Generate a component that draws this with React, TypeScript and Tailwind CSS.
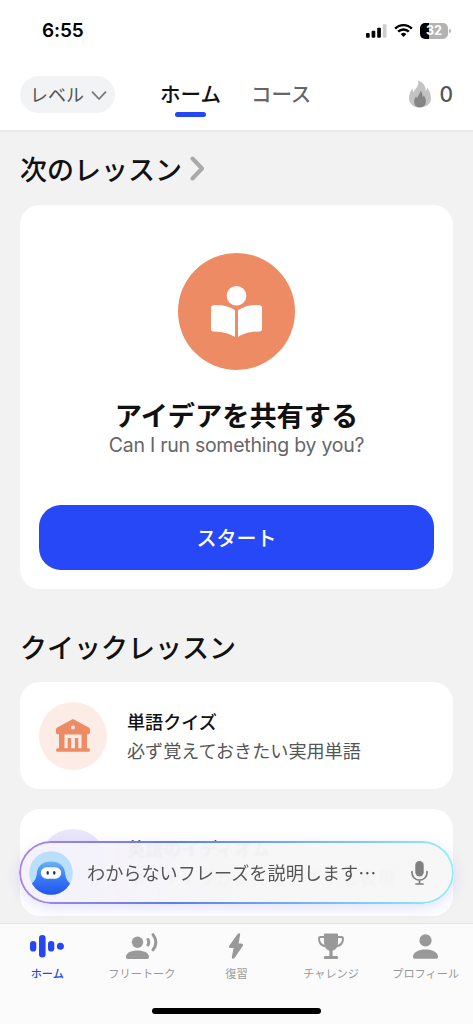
import type { ReactNode } from 'react'
import { clsx } from 'clsx'

function StatusBar() {
  return (
    <div className="flex h-[61px] shrink-0 items-center justify-between bg-white pl-[42px] pr-[22px]">
      <span className="font-['Inter'] text-[19px] font-semibold leading-none tracking-[-0.1px] text-black">6:55</span>
      <div className="flex items-center gap-[7px]">
        <svg width="21" height="14" viewBox="0 0 21 14">
          <rect x="0" y="9" width="3.7" height="4.8" rx="1" />
          <rect x="5.6" y="6.8" width="3.7" height="7" rx="1" />
          <rect x="11.2" y="3.8" width="3.7" height="10" rx="1" />
          <rect x="16.8" y="0.2" width="3.7" height="13.6" rx="1" fill="#cccccc" />
        </svg>
        <svg width="19" height="15" viewBox="0 0 20 15">
          <g fill="none" stroke="#000" strokeWidth="2.6">
            <path d="M1.2 5.5a12.4 12.4 0 0 1 17.6 0" />
            <path d="M4.4 8.8a7.9 7.9 0 0 1 11.2 0" />
          </g>
          <path d="M10 14.4l-2.9-3a4.1 4.1 0 0 1 5.8 0z" />
        </svg>
        <div className="flex items-center">
          <div className="h-4 w-7 rounded-[5px] bg-linear-to-r from-black from-[32%] to-[#b3b3b3] to-[32%] text-center font-['Inter'] text-[12.5px] font-bold leading-[16px] text-white">
            32
          </div>
          <span className="ml-px h-1 w-[2px] rounded-r-full bg-[#b3b3b3]" />
        </div>
      </div>
    </div>
  )
}

function Header() {
  return (
    <header className="flex h-[71px] shrink-0 items-start border-b-2 border-[#e9e9e9] bg-white">
      <button className="ml-5 mt-[15px] flex h-[37px] w-[95px] items-center rounded-full bg-[#f2f3f5] pl-[10px] text-[18px] text-[#555]">
        レベル
        <svg className="ml-[7px] mt-0.5" width="16" height="10" viewBox="0 0 16 10" fill="none" stroke="#777" strokeWidth="1.8" strokeLinecap="round" strokeLinejoin="round">
          <path d="M1.5 1.2L8 8l6.5-6.8" />
        </svg>
      </button>
      <div className="ml-[45px] mt-[17px] flex flex-col items-center">
        <span className="text-[20.5px] font-medium leading-[30px] text-[#111]">ホーム</span>
        <span className="mt-[4px] h-[5px] w-[31px] rounded-full bg-[#2546f5]" />
      </div>
      <span className="ml-[30px] mt-[17px] text-[20.5px] font-medium leading-[30px] text-[#666]">コース</span>
      <div className="ml-auto mr-5 mt-[19px] flex h-7 items-center gap-[8px]">
        <svg width="22" height="28" viewBox="0 0 22 28">
          <path fill="#c3c3c3" d="M9 .5c4.5 1.7 8 5 7.600 10.300 1.200-.6 1.700-2 1.600-3.300 2.300 3 3.800 7 3.800 10.800C22 24 17.200 27.500 11 27.500S0 24 0 18.200C0 14.500 1.400 11 3.700 8.300c-.2 1.800.1 3.200 1.200 4C5.200 8.300 11 6.500 9 .5z" />
          <path fill="#858585" d="M11.200 10.500c2.300 1.700 2.500 4.300 2.100 6.500.8-.3 1.300-.9 1.500-1.700 1.500 2.200 2.200 4.300 2.100 6.500-.1 3.600-2.700 5.500-6 5.500s-5.800-2-5.700-5.600c0-2.200.8-3.900 1.800-5.400.2 1 .6 1.600 1.300 2 .2-3.300 3.500-4.500 2.900-7.800z" />
        </svg>
        <span className="font-['Inter'] text-[21px] font-medium leading-none text-[#555]">0</span>
      </div>
    </header>
  )
}

function ReadingIcon() {
  return (
    <svg width="51" height="51" viewBox="0 0 51 51" fill="#fff">
      <circle cx="25.5" cy="9.8" r="9.8" />
      <path d="M24 24.200V51C18 47.300 12.500 45.700 2.500 45.400 1 45.400 0 44.400 0 43V21.800c0-1.500 1-2.500 2.500-2.600C11 18.700 17.500 20.300 24 24.200z" />
      <path d="M27 24.200V51c6-3.700 11.500-5.300 21.500-5.600 1.500 0 2.500-1 2.500-2.400V21.800c0-1.500-1-2.500-2.500-2.600C40 18.700 33.500 20.300 27 24.200z" />
    </svg>
  )
}

function MuseumIcon() {
  return (
    <svg width="34" height="33" viewBox="0 0 34 33" fill="#ed8b65">
      <path
        fillRule="evenodd"
        d="M15.600.7c.9-.5 1.900-.5 2.800 0L32.300 8.300c1 .6 1.700 1.500 1.700 2.500v2.600c0 1.100-.8 1.900-1.900 1.900H31v13.900h1.200c2.400 0 2.400 3.600 0 3.600H1.800c-2.400 0-2.400-3.600 0-3.600H3V15.300H1.900C.8 15.300 0 14.500 0 13.400v-2.600c0-1 .7-1.900 1.700-2.500zM17 6.600a2 2 0 1 0 0 4 2 2 0 0 0 0-4zM8.500 15.500v13.700h17V15.500z"
      />
      <rect x="11.7" y="19" width="3.4" height="11" />
      <rect x="18.9" y="19" width="3.4" height="11" />
    </svg>
  )
}

function QuickCard({ title, subtitle, tint, children }: { title: string; subtitle: string; tint: string; children?: ReactNode }) {
  return (
    <div className="flex h-[107px] items-center rounded-[20px] bg-white pl-[19px]">
      <div className={clsx('flex size-[68px] shrink-0 items-center justify-center rounded-full', tint)}>{children}</div>
      <div className="ml-[20px] whitespace-nowrap text-[18.1px] leading-[29px]">
        <div className="font-medium text-[#111]">{title}</div>
        <div className="text-[#555]">{subtitle}</div>
      </div>
    </div>
  )
}

function Avatar() {
  return (
    <svg className="shrink-0" width="44" height="44" viewBox="0 0 44 44">
      <defs>
        <linearGradient id="robe" x1="0" y1="0" x2="0" y2="1">
          <stop offset="0" stopColor="#6cb2f5" />
          <stop offset=".45" stopColor="#3c7ff5" />
          <stop offset="1" stopColor="#2354ee" />
        </linearGradient>
        <clipPath id="avatar">
          <circle cx="22" cy="22" r="21.8" />
        </clipPath>
      </defs>
      <g clipPath="url(#avatar)">
        <rect width="44" height="44" fill="#badffb" />
        <path fill="url(#robe)" d="M22 10.500c-8 0-13.500 4.500-14 11C7.600 26 6.500 30 1 34v10h42V34c-5.500-4-6.600-8-7-12.500-.5-6.500-6-11-14-11z" />
        <rect x="11.8" y="16.2" width="20.4" height="11.6" rx="5.8" fill="#fff" />
        <ellipse cx="18.7" cy="21.8" rx="1.2" ry="1.9" fill="#1b2b78" />
        <ellipse cx="25.3" cy="21.8" rx="1.2" ry="1.9" fill="#1b2b78" />
      </g>
    </svg>
  )
}

function AskBar() {
  return (
    <div className="absolute left-[19px] top-[841px] h-[63px] w-[435px] rounded-full shadow-[0_4px_14px_rgba(110,110,255,0.2)]">
      <div className="flex h-full items-center rounded-full bg-linear-to-r from-[#f4f1fc]/95 to-[#f6f6f6]/97 to-50% pl-[10px] backdrop-blur-[1px]">
        <Avatar />
        <span className="ml-[14px] whitespace-nowrap text-[18.15px] leading-none text-[#555]">わからないフレーズを説明します…</span>
        <svg className="ml-auto mr-[26px]" width="17" height="24" viewBox="0 0 17 24">
          <rect x="4.3" y="0" width="8.4" height="15.5" rx="4.2" fill="#808080" />
          <path d="M1 10.500v1.200a7.500 7.500 0 0 0 15 0v-1.200M8.500 19v4M5 23h7" fill="none" stroke="#808080" strokeWidth="1.7" strokeLinecap="round" />
        </svg>
      </div>
      {/* gradient ring, masked so the translucent fill stays visible */}
      <div className="pointer-events-none absolute inset-0 rounded-full bg-linear-to-r from-[#ab85e6] via-[#5c7fe0] via-35% to-[#94eefa] p-[2px] [mask:linear-gradient(#000_0_0)_content-box_exclude,linear-gradient(#000_0_0)]" />
    </div>
  )
}

const NAV_ITEMS = [
  {
    label: 'ホーム',
    active: true,
    icon: (
      <svg width="34" height="28" viewBox="0 0 34 28" fill="#2546f5">
        <rect x="0" y="9" width="6.3" height="10.5" rx="3.1" />
        <rect x="9" y="3" width="6.6" height="22.5" rx="3.3" />
        <rect x="18" y="9" width="6.3" height="10.5" rx="3.1" />
        <circle cx="30.4" cy="14.2" r="3.5" />
      </svg>
    ),
  },
  {
    label: 'フリートーク',
    icon: (
      <svg width="32" height="28" viewBox="0 0 32 28" fill="#999">
        <circle cx="11.5" cy="10.2" r="5.7" />
        <path d="M0 25c0-4.600 5.200-6.600 11.500-6.600S23 20.400 23 25c0 1.200-.8 2-2 2H2c-1.200 0-2-.8-2-2z" />
        <path d="M22 7.500c1 1.800 1 3.700 0 5.500M27 2.700c3.600 4.800 3.600 10.400 0 15.200" fill="none" stroke="#999" strokeWidth="3" strokeLinecap="round" />
      </svg>
    ),
  },
  {
    label: '復習',
    icon: (
      <svg width="14" height="28" viewBox="0 0 14 28" fill="#999" stroke="#999" strokeWidth="1.4" strokeLinejoin="round">
        <path d="M9.200 2.300L.8 14.200c-.4.700-.2 1.200.6 1.200h4L3.600 25c-.2 1.200.6 1.500 1.300.6L13.200 13.500c.4-.7.100-1.200-.7-1.200H8.700l1.700-9.200c.2-1.200-.6-1.600-1.200-.8z" />
      </svg>
    ),
  },
  {
    label: 'チャレンジ',
    icon: (
      <svg width="26" height="28" viewBox="0 0 26 28" fill="#999">
        <path d="M6 2.500c0-.6.500-1 1.100-1h11.800c.6 0 1.100.4 1.100 1V10c0 5-3 9-7 9s-7-4-7-9z" />
        <path d="M6.500 5H2.600C1.700 5 1 5.700 1 6.600c0 4.500 2.600 7.300 7 7.800M19.500 5h3.900c.9 0 1.600.7 1.600 1.600 0 4.500-2.600 7.300-7 7.800" fill="none" stroke="#999" strokeWidth="2" />
        <path d="M11.400 17h3.200v7.200h-3.200z" />
        <rect x="5.8" y="24" width="14.4" height="3" rx="1.5" />
      </svg>
    ),
  },
  {
    label: 'プロフィール',
    icon: (
      <svg width="25" height="28" viewBox="0 0 25 28" fill="#999">
        <circle cx="12.5" cy="8.4" r="6.1" />
        <path d="M0 25c0-5 5.800-7.600 12.500-7.600S25 20 25 25c0 1-.7 1.700-1.700 1.700H1.700C.7 26.700 0 26 0 25z" />
      </svg>
    ),
  },
]

function BottomNav() {
  return (
    <nav className="absolute inset-x-0 bottom-0 h-[101px] border-t border-[#e2e2e2] bg-[#fbfbfb]">
      <div className="grid grid-cols-5 pt-[8px]">
        {NAV_ITEMS.map((item) => (
          <div key={item.label} className="flex flex-col items-center">
            {item.icon}
            <span className={clsx('mt-[4px] whitespace-nowrap text-[11.2px] leading-[18px]', item.active ? 'font-medium text-[#2546f5]' : 'text-[#999]')}>
              {item.label}
            </span>
          </div>
        ))}
      </div>
      <div className="mx-auto mt-[26px] h-[6px] w-[169px] rounded-full bg-black" />
    </nav>
  )
}

export default function App() {
  return (
    <div className="relative flex h-[1024px] w-[473px] flex-col overflow-hidden bg-[#f2f2f2] font-['Noto_Sans_CJK_JP','Inter',sans-serif]">
      <StatusBar />
      <Header />
      <main className="px-5">
        <h2 className="mt-[16px] flex h-[41px] items-center text-[27px] font-medium leading-none text-[#111]">
          次のレッスン
          <svg className="ml-2" width="15" height="25" viewBox="0 0 15 25" fill="none" stroke="#aaa" strokeWidth="4" strokeLinecap="round" strokeLinejoin="round">
            <path d="M2.500 2.500l9.500 10-9.500 10" />
          </svg>
        </h2>
        <section className="mt-4 flex h-[384px] flex-col items-center rounded-[20px] bg-white px-[19px] pt-[48px]">
          <div className="flex size-[117px] shrink-0 items-center justify-center rounded-full bg-[#ed8b65]">
            <ReadingIcon />
          </div>
          <div className="mt-[26px] text-[27.2px] font-bold leading-[36px] text-[#111]">アイデアを共有する</div>
          <div className="mt-px font-['Inter'] text-[19.5px] leading-[24px] tracking-[-0.27px] text-[#666]">Can I run something by you?</div>
          <button className="mt-auto mb-[19px] h-[65px] w-full shrink-0 rounded-[22px] bg-[#2748f6] text-[20px] font-medium text-white">スタート</button>
        </section>
        <h2 className="mt-[37px] flex h-[41px] items-center text-[27px] font-medium leading-none text-[#111]">クイックレッスン</h2>
        <div className="mt-[15px] flex flex-col gap-5">
          <QuickCard title="単語クイズ" subtitle="必ず覚えておきたい実用単語" tint="bg-[#fbece6]">
            <MuseumIcon />
          </QuickCard>
          <QuickCard title="英語のイディオム" subtitle="ネイティブがよく使っている表現" tint="bg-[#eae6fb]" />
        </div>
      </main>
      <AskBar />
      <BottomNav />
    </div>
  )
}
